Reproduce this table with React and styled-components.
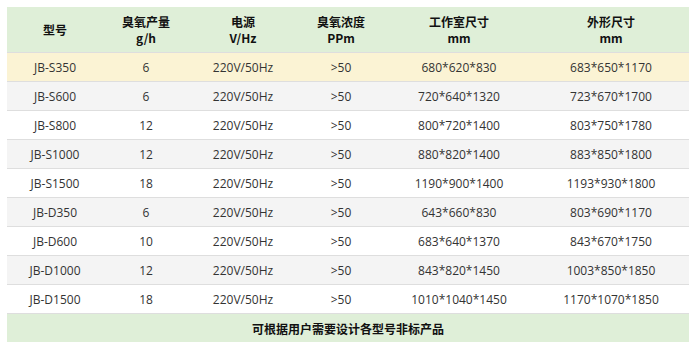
import React from "react";
import styled, { createGlobalStyle } from "styled-components";

const GlobalStyle = createGlobalStyle`
  body {
    margin: 0;
    background: #fff;
    font-family: "Open Sans", "Noto Sans CJK SC", sans-serif;
  }
`;

const COLUMNS = [
  { title: "型号", width: 96 },
  { title: "臭氧产量", unit: "g/h", width: 86 },
  { title: "电源", unit: "V/Hz", width: 108 },
  { title: "臭氧浓度", unit: "PPm", width: 88 },
  { title: "工作室尺寸", unit: "mm", width: 148 },
  { title: "外形尺寸", unit: "mm", width: 156 },
];

const ROWS = [
  ["JB-S350", "6", "220V/50Hz", ">50", "680*620*830", "683*650*1170"],
  ["JB-S600", "6", "220V/50Hz", ">50", "720*640*1320", "723*670*1700"],
  ["JB-S800", "12", "220V/50Hz", ">50", "800*720*1400", "803*750*1780"],
  ["JB-S1000", "12", "220V/50Hz", ">50", "880*820*1400", "883*850*1800"],
  ["JB-S1500", "18", "220V/50Hz", ">50", "1190*900*1400", "1193*930*1800"],
  ["JB-D350", "6", "220V/50Hz", ">50", "643*660*830", "803*690*1170"],
  ["JB-D600", "10", "220V/50Hz", ">50", "683*640*1370", "843*670*1750"],
  ["JB-D1000", "12", "220V/50Hz", ">50", "843*820*1450", "1003*850*1850"],
  ["JB-D1500", "18", "220V/50Hz", ">50", "1010*1040*1450", "1170*1070*1850"],
];

const Wrapper = styled.div`
  padding: 7px 7px 0 7px;
`;

const Table = styled.table`
  width: 682px;
  border-collapse: collapse;
  table-layout: fixed;
  font-size: 12px;
  color: #333;
`;

const HeadRow = styled.tr`
  background: #dfefd8;
`;

const HeadCell = styled.th`
  height: 45px;
  padding: 0;
  text-align: center;
  vertical-align: middle;
  font-weight: bold;
  color: #111;
  line-height: 16px;
  font-family: "Noto Sans CJK SC", "Open Sans", sans-serif;
`;

const Row = styled.tr`
  background: ${({ $tone }) =>
    $tone === "warn" ? "#fbf3d4" : $tone === "gray" ? "#f4f4f4" : "#fff"};
`;

const Cell = styled.td`
  height: 28px;
  padding: 0;
  text-align: center;
  vertical-align: middle;
  border-top: 1px solid #dedede;
  white-space: nowrap;
`;

const FootCell = styled.td`
  height: 28px;
  padding: 0;
  background: #dfefd8;
  border-top: 1px solid #dedede;
  text-align: center;
  font-weight: bold;
  color: #111;
  font-family: "Noto Sans CJK SC", sans-serif;
`;

export default function App() {
  return (
    <Wrapper>
      <GlobalStyle />
      <Table>
        <colgroup>
          {COLUMNS.map((c) => (
            <col key={c.title} style={{ width: c.width }} />
          ))}
        </colgroup>
        <thead>
          <HeadRow>
            {COLUMNS.map((c) => (
              <HeadCell key={c.title}>
                {c.title}
                {c.unit && (
                  <>
                    <br />
                    {c.unit}
                  </>
                )}
              </HeadCell>
            ))}
          </HeadRow>
        </thead>
        <tbody>
          {ROWS.map((r, i) => (
            <Row key={r[0]} $tone={i === 0 ? "warn" : i % 2 ? "gray" : "white"}>
              {r.map((v, j) => (
                <Cell key={j}>{v}</Cell>
              ))}
            </Row>
          ))}
          <tr>
            <FootCell colSpan={6}>可根据用户需要设计各型号非标产品</FootCell>
          </tr>
        </tbody>
      </Table>
    </Wrapper>
  );
}
